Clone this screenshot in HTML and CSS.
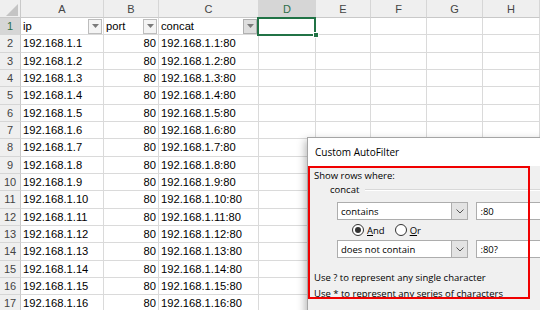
FILE: index.html
```html
<!DOCTYPE html>
<html>
<head>
<meta charset="utf-8">
<link rel="stylesheet" href="styles.css">
</head>
<body>
<div class="screen">
<div class="sheet">
  <div class="row head">
    <div class="corner"><svg width="21" height="18" viewBox="0 0 21 18"><polygon points="18,4 18,16 6,16" fill="#c4c4c4"/></svg></div>
    <div class="hd ca">A</div><div class="hd cb">B</div><div class="hd cc">C</div><div class="hd cd sel">D</div><div class="hd ce">E</div><div class="hd cf">F</div><div class="hd cg">G</div><div class="hd ch">H</div>
  </div>
  <div class="row">
    <div class="rh sel">1</div>
    <div class="c ca"><span class="t">ip</span><span class="fbtn"><svg width="7" height="4" viewBox="0 0 7 4"><polygon points="0,0 7,0 3.5,4" fill="#7a7a7a"/></svg></span></div>
    <div class="c cb"><span class="t">port</span><span class="fbtn"><svg width="7" height="4" viewBox="0 0 7 4"><polygon points="0,0 7,0 3.5,4" fill="#7a7a7a"/></svg></span></div>
    <div class="c cc"><span class="t">concat</span><span class="fbtn hot"><svg width="7" height="4" viewBox="0 0 7 4"><polygon points="0,0 7,0 3.5,4" fill="#7a7a7a"/></svg></span></div>
    <div class="c cd active"><span class="selbox"></span><span class="handle"></span></div><div class="c ce"></div><div class="c cf"></div><div class="c cg"></div><div class="c ch"></div>
  </div>
  <div class="row"><div class="rh">2</div><div class="c ca">192.168.1.1</div><div class="c cb num">80</div><div class="c cc">192.168.1.1:80</div><div class="c cd"></div><div class="c ce"></div><div class="c cf"></div><div class="c cg"></div><div class="c ch"></div></div>
  <div class="row"><div class="rh">3</div><div class="c ca">192.168.1.2</div><div class="c cb num">80</div><div class="c cc">192.168.1.2:80</div><div class="c cd"></div><div class="c ce"></div><div class="c cf"></div><div class="c cg"></div><div class="c ch"></div></div>
  <div class="row"><div class="rh">4</div><div class="c ca">192.168.1.3</div><div class="c cb num">80</div><div class="c cc">192.168.1.3:80</div><div class="c cd"></div><div class="c ce"></div><div class="c cf"></div><div class="c cg"></div><div class="c ch"></div></div>
  <div class="row"><div class="rh">5</div><div class="c ca">192.168.1.4</div><div class="c cb num">80</div><div class="c cc">192.168.1.4:80</div><div class="c cd"></div><div class="c ce"></div><div class="c cf"></div><div class="c cg"></div><div class="c ch"></div></div>
  <div class="row"><div class="rh">6</div><div class="c ca">192.168.1.5</div><div class="c cb num">80</div><div class="c cc">192.168.1.5:80</div><div class="c cd"></div><div class="c ce"></div><div class="c cf"></div><div class="c cg"></div><div class="c ch"></div></div>
  <div class="row"><div class="rh">7</div><div class="c ca">192.168.1.6</div><div class="c cb num">80</div><div class="c cc">192.168.1.6:80</div><div class="c cd"></div><div class="c ce"></div><div class="c cf"></div><div class="c cg"></div><div class="c ch"></div></div>
  <div class="row"><div class="rh">8</div><div class="c ca">192.168.1.7</div><div class="c cb num">80</div><div class="c cc">192.168.1.7:80</div><div class="c cd"></div><div class="c ce"></div><div class="c cf"></div><div class="c cg"></div><div class="c ch"></div></div>
  <div class="row"><div class="rh">9</div><div class="c ca">192.168.1.8</div><div class="c cb num">80</div><div class="c cc">192.168.1.8:80</div><div class="c cd"></div><div class="c ce"></div><div class="c cf"></div><div class="c cg"></div><div class="c ch"></div></div>
  <div class="row"><div class="rh">10</div><div class="c ca">192.168.1.9</div><div class="c cb num">80</div><div class="c cc">192.168.1.9:80</div><div class="c cd"></div><div class="c ce"></div><div class="c cf"></div><div class="c cg"></div><div class="c ch"></div></div>
  <div class="row"><div class="rh">11</div><div class="c ca">192.168.1.10</div><div class="c cb num">80</div><div class="c cc">192.168.1.10:80</div><div class="c cd"></div><div class="c ce"></div><div class="c cf"></div><div class="c cg"></div><div class="c ch"></div></div>
  <div class="row"><div class="rh">12</div><div class="c ca">192.168.1.11</div><div class="c cb num">80</div><div class="c cc">192.168.1.11:80</div><div class="c cd"></div><div class="c ce"></div><div class="c cf"></div><div class="c cg"></div><div class="c ch"></div></div>
  <div class="row"><div class="rh">13</div><div class="c ca">192.168.1.12</div><div class="c cb num">80</div><div class="c cc">192.168.1.12:80</div><div class="c cd"></div><div class="c ce"></div><div class="c cf"></div><div class="c cg"></div><div class="c ch"></div></div>
  <div class="row"><div class="rh">14</div><div class="c ca">192.168.1.13</div><div class="c cb num">80</div><div class="c cc">192.168.1.13:80</div><div class="c cd"></div><div class="c ce"></div><div class="c cf"></div><div class="c cg"></div><div class="c ch"></div></div>
  <div class="row"><div class="rh">15</div><div class="c ca">192.168.1.14</div><div class="c cb num">80</div><div class="c cc">192.168.1.14:80</div><div class="c cd"></div><div class="c ce"></div><div class="c cf"></div><div class="c cg"></div><div class="c ch"></div></div>
  <div class="row"><div class="rh">16</div><div class="c ca">192.168.1.15</div><div class="c cb num">80</div><div class="c cc">192.168.1.15:80</div><div class="c cd"></div><div class="c ce"></div><div class="c cf"></div><div class="c cg"></div><div class="c ch"></div></div>
  <div class="row"><div class="rh">17</div><div class="c ca">192.168.1.16</div><div class="c cb num">80</div><div class="c cc">192.168.1.16:80</div><div class="c cd"></div><div class="c ce"></div><div class="c cf"></div><div class="c cg"></div><div class="c ch"></div></div>
</div>

<div class="dialog">
  <div class="dlg-title">Custom AutoFilter</div>
  <div class="dlg-body">
    <div class="line">Show rows where:</div>
    <div class="grp"><span>concat</span><span class="groove"></span></div>
    <div class="cond">
      <div class="combo"><span class="val">contains</span><span class="dd"><svg width="8" height="5" viewBox="0 0 8 5"><polyline points="0.5,0.5 4,4 7.5,0.5" fill="none" stroke="#555" stroke-width="1"/></svg></span></div>
      <div class="field">:80</div>
    </div>
    <div class="radios">
      <span class="radio on"><span class="dot"></span></span><span class="rlabel"><u>A</u>nd</span>
      <span class="radio or"></span><span class="rlabel"><u>O</u>r</span>
    </div>
    <div class="cond tight">
      <div class="combo"><span class="val">does not contain</span><span class="dd"><svg width="8" height="5" viewBox="0 0 8 5"><polyline points="0.5,0.5 4,4 7.5,0.5" fill="none" stroke="#555" stroke-width="1"/></svg></span></div>
      <div class="field">:80?</div>
    </div>
    <div class="help">
      <div>Use ? to represent any single character</div>
      <div>Use * to represent any series of characters</div>
    </div>
  </div>
  <div class="redbox"></div>
</div>
</div>
</body>
</html>
```
FILE: styles.css
```css
html, body {
  margin: 0;
  padding: 0;
}
body {
  width: 540px;
  height: 310px;
  overflow: hidden;
  background: #ffffff;
  font-family: "Liberation Sans", Arial, sans-serif;
  color: #000;
}
.screen {
  position: relative;
  width: 540px;
  height: 310px;
  overflow: hidden;
}
.sheet {
  display: flex;
  flex-direction: column;
  width: 540px;
}
.row {
  display: flex;
  height: 17.33px;
  flex: none;
}
.row.head {
  height: 18px;
}
.corner {
  width: 21px;
  flex: none;
  background: #efefef;
  border-right: 1px solid #c9c9c9;
  border-bottom: 1px solid #c9c9c9;
  box-sizing: border-box;
  overflow: hidden;
}
.corner svg {
  display: block;
}
.hd {
  background: #efefef;
  border-right: 1px solid #d6d6d6;
  border-bottom: 1px solid #c9c9c9;
  box-sizing: border-box;
  display: flex;
  align-items: center;
  justify-content: center;
  font-size: 11px;
  color: #444;
  flex: none;
}
.rh {
  width: 21px;
  flex: none;
  background: #efefef;
  border-right: 1px solid #c9c9c9;
  border-bottom: 1px solid #d6d6d6;
  box-sizing: border-box;
  display: flex;
  align-items: center;
  justify-content: center;
  font-size: 11px;
  color: #444;
}
.hd.sel, .rh.sel {
  background: #d6d6d6;
  color: #2b6e48;
}
.c {
  flex: none;
  box-sizing: border-box;
  border-right: 1px solid #dadada;
  border-bottom: 1px solid #dadada;
  padding: 0 2px;
  display: flex;
  align-items: center;
  font-size: 11.2px;
  white-space: nowrap;
  overflow: visible;
  position: relative;
}
.c.num {
  justify-content: flex-end;
}
.ca { width: 83px; }
.cb { width: 55px; }
.cc { width: 100px; }
.cd { width: 57px; }
.ce { width: 55px; }
.cf { width: 56px; }
.cg { width: 56px; }
.ch { width: 57px; }
.c .t {
  flex: 1;
}
.fbtn {
  width: 14px;
  height: 15px;
  box-sizing: border-box;
  margin-right: -1px;
  border: 1px solid #bdbdbd;
  background: #f4f4f4;
  display: flex;
  align-items: center;
  justify-content: center;
}
.fbtn.hot {
  background: #dedede;
  border-color: #b0b0b0;
}
.fbtn svg {
  display: block;
}
.active {
  z-index: 2;
}
.selbox {
  position: absolute;
  left: -2px;
  top: -1px;
  width: 59px;
  height: 19px;
  border: 2px solid #217346;
  box-sizing: border-box;
}
.handle {
  position: absolute;
  right: -4px;
  bottom: -4px;
  width: 6px;
  height: 6px;
  background: #217346;
  border: 1px solid #fff;
  box-sizing: border-box;
}

/* dialog */
.dialog {
  position: absolute;
  left: 307px;
  top: 137px;
  width: 260px;
  height: 200px;
  background: #f0f0f0;
  border: 1px solid #a5a5a5;
  box-shadow: -2px 3px 8px rgba(0, 0, 0, 0.28);
  font-family: "Open Sans", "Noto Sans", sans-serif;
  font-size: 9.5px;
  color: #000;
  z-index: 5;
}
.dlg-title {
  height: 27px;
  padding-bottom: 1px;
  background: #ffffff;
  padding-left: 7px;
  display: flex;
  align-items: center;
  font-size: 10px;
}
.dlg-body {
  padding: 3px 0 0 6px;
}
.line {
  height: 14px;
  line-height: 14px;
}
.grp {
  display: flex;
  align-items: center;
  height: 14px;
  line-height: 14px;
  margin-left: 16px;
}
.groove {
  flex: 1;
  margin-left: 6px;
  border-top: 1px solid #d8d8d8;
  border-bottom: 1px solid #ffffff;
}
.cond {
  display: flex;
  gap: 8px;
  margin: 5px 0 0 23px;
  height: 18px;
}
.cond.tight {
  margin-top: 0;
}
.combo {
  width: 144px;
  height: 18px;
  box-sizing: border-box;
  border: 1px solid #adadad;
  background: #ffffff;
  display: flex;
}
.val {
  flex: 1;
  padding-left: 3px;
  display: flex;
  align-items: center;
}
.dd {
  width: 15px;
  border-left: 1px solid #adadad;
  background: #e3e3e3;
  display: flex;
  align-items: center;
  justify-content: center;
}
.dd svg {
  display: block;
}
.field {
  width: 100px;
  height: 18px;
  box-sizing: border-box;
  border: 1px solid #adadad;
  background: #ffffff;
  padding-left: 3px;
  display: flex;
  align-items: center;
}
.radios {
  display: flex;
  align-items: center;
  height: 20px;
  margin-left: 38px;
}
.radio {
  width: 12px;
  height: 12px;
  box-sizing: border-box;
  border: 1px solid #333;
  border-radius: 50%;
  background: #fff;
  display: flex;
  align-items: center;
  justify-content: center;
}
.radio.or {
  margin-left: 10px;
}
.dot {
  width: 6px;
  height: 6px;
  border-radius: 50%;
  background: #333;
}
.rlabel {
  margin-left: 3px;
}
.help {
  margin-top: 12px;
  line-height: 16px;
}
.redbox {
  position: absolute;
  left: 0;
  top: 28px;
  width: 222px;
  height: 133px;
  border: 2px solid #f00000;
  box-sizing: border-box;
}
```
